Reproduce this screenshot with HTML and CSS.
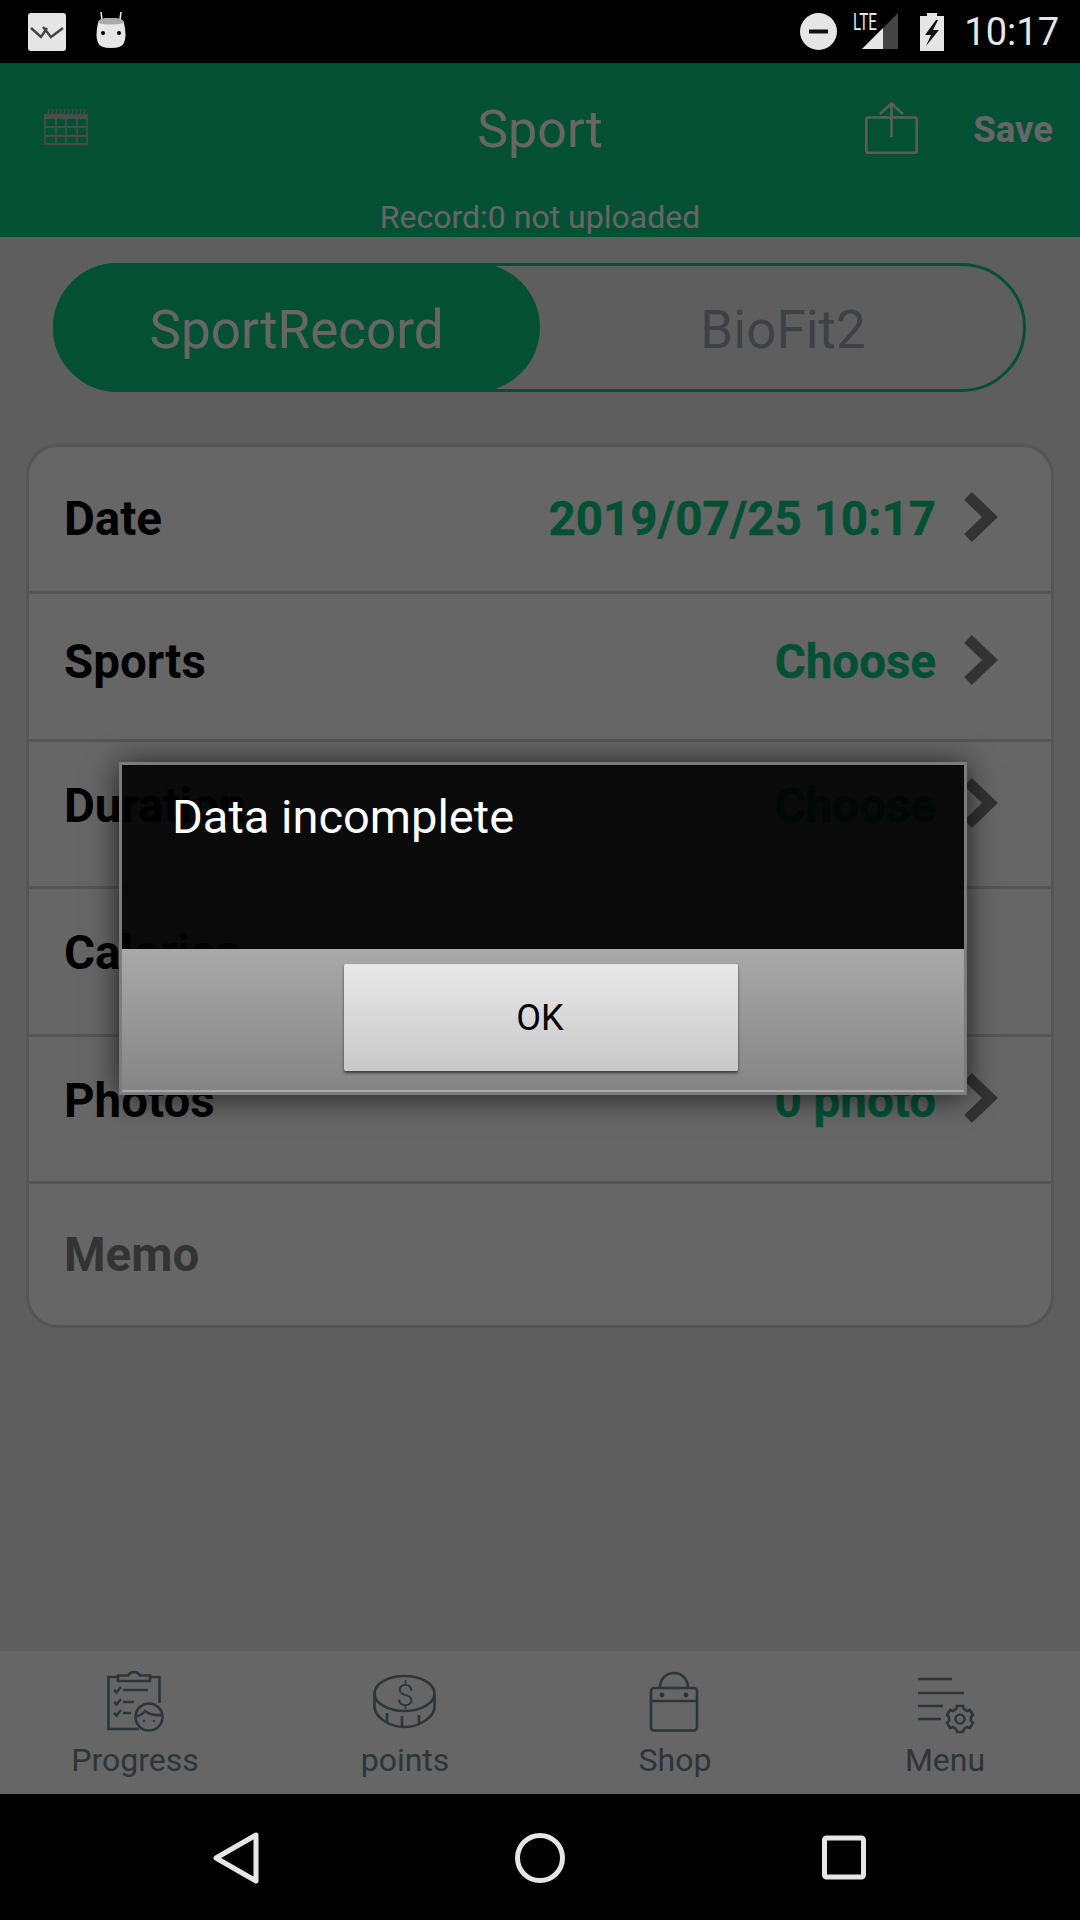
FILE: index.html
```html
<!DOCTYPE html>
<html lang="en">
<head>
  <meta charset="UTF-8">
  <meta name="viewport" content="width=device-width, initial-scale=1.0">
  <title>Sport</title>
  <link rel="stylesheet" href="styles.css">
</head>
<body>
  <div class="phone">
    <div class="status-bar">
      <div class="status-left">
        <svg class="ic-note" viewBox="0 0 38 38">
          <rect width="38" height="38" rx="3" fill="#e6e6e6"/>
          <path d="M3 15 L13 24 L19 15 M15 14 L23 24 L35 15" fill="none" stroke="#444" stroke-width="2.4"/>
        </svg>
        <svg class="ic-droid" viewBox="0 0 32 36">
          <path d="M7 8 L6 0 M25 8 L26 0" stroke="#e6e6e6" stroke-width="1.6"/>
          <path d="M3 11 Q3 6 16 6 Q29 6 29 11 Q32 24 29 31 Q27 36 16 36 Q5 36 3 31 Q0 24 3 11 Z" fill="#e6e6e6"/>
          <path d="M3 11 Q3 6 16 6 Q29 6 29 11 Q16 14 3 11 Z" fill="#aaa"/>
          <circle cx="8" cy="21" r="2" fill="#000"/>
          <circle cx="24" cy="21" r="2" fill="#000"/>
        </svg>
      </div>
      <div class="status-right">
        <svg class="ic-dnd" viewBox="0 0 37 37">
          <circle cx="18.5" cy="18.5" r="18.5" fill="#e6e6e6"/>
          <rect x="9" y="16.5" width="19" height="4" fill="#111"/>
        </svg>
        <svg class="ic-signal" viewBox="0 0 45 37">
          <path d="M45 0 V36 H9 Z" fill="#444"/>
          <path d="M30 15 V36 H9 Z" fill="#e6e6e6"/>
          <text x="0" y="17" class="lte" textLength="24" lengthAdjust="spacingAndGlyphs">LTE</text>
        </svg>
        <svg class="ic-battery" viewBox="0 0 24 38">
          <path d="M7 0 H17 V3 H24 V38 H0 V3 H7 Z" fill="#e6e6e6"/>
          <path d="M16 7 L5 22 H11 L6 33 L19 17 H13 L18 7 Z" fill="#111"/>
        </svg>
        <span class="clock">10:17</span>
      </div>
    </div>

    <div class="app">
      <div class="header">
        <div class="header-top">
          <svg class="ic-calendar" viewBox="0 0 44 37">
            <path d="M4 6 L5 1 M8 6 L9 1 M12 6 L13 1 M16 6 L17 1 M20 6 L21 1 M24 6 L25 1 M28 6 L29 1 M32 6 L33 1 M36 6 L37 1 M40 6 L41 1" stroke="#bbb" stroke-width="1.2"/>
            <rect x="0" y="6" width="44" height="5" fill="#bbb"/>
            <path d="M1 11 V36 H43 V11 M1 19 H43 M1 28 H43 M12 11 V36 M22 11 V36 M33 11 V36" fill="none" stroke="#bbb" stroke-width="1.8"/>
          </svg>
          <div class="title">Sport</div>
          <div class="header-actions">
            <svg class="ic-upload" viewBox="0 0 53 52">
              <rect x="1.3" y="15.5" width="50.4" height="35.2" rx="2" fill="none" stroke="#e6e6e6" stroke-width="2.6"/>
              <path d="M26.5 1 V35 M15 12 L26.5 1.5 L38 12" fill="none" stroke="#e6e6e6" stroke-width="2.6"/>
            </svg>
            <span class="save">Save</span>
          </div>
        </div>
        <div class="subtitle">Record:0 not uploaded</div>
      </div>

      <div class="segment">
        <div class="seg-item seg-active">SportRecord</div>
        <div class="seg-item">BioFit2</div>
      </div>

      <div class="card">
        <div class="row">
          <span class="row-label">Date</span>
          <span class="row-value">2019/07/25 10:17</span>
          <svg class="chevron" viewBox="0 0 34 50"><path d="M4 4 L26 25 L4 46" fill="none" stroke="#808080" stroke-width="11"/></svg>
        </div>
        <div class="row">
          <span class="row-label">Sports</span>
          <span class="row-value">Choose</span>
          <svg class="chevron" viewBox="0 0 34 50"><path d="M4 4 L26 25 L4 46" fill="none" stroke="#808080" stroke-width="11"/></svg>
        </div>
        <div class="row">
          <span class="row-label">Duration</span>
          <span class="row-value">Choose</span>
          <svg class="chevron" viewBox="0 0 34 50"><path d="M4 4 L26 25 L4 46" fill="none" stroke="#808080" stroke-width="11"/></svg>
        </div>
        <div class="row">
          <span class="row-label">Calories</span>
        </div>
        <div class="row">
          <span class="row-label">Photos</span>
          <span class="row-value">0 photo</span>
          <svg class="chevron" viewBox="0 0 34 50"><path d="M4 4 L26 25 L4 46" fill="none" stroke="#808080" stroke-width="11"/></svg>
        </div>
        <div class="row">
          <span class="row-label row-memo">Memo</span>
        </div>
      </div>

      <div class="tabs">
        <div class="tab">
          <svg class="tab-icon" viewBox="0 0 64 64">
            <path d="M36 59 H5.5 V7 H15 M47 7 H56.5 V33" fill="none"/>
            <path d="M15 11 V5.5 H25 Q27 2 31 2 Q35 2 37 5.5 H47 V11 Z" fill="none"/>
            <path d="M11 20 L13.5 22.5 L18 17 M11 32 L13.5 34.5 L18 29 M11 43 L13.5 45.5 L18 40" fill="none"/>
            <path d="M20 20 H45 M20 32 H31 M20 43 H28" fill="none"/>
            <circle cx="46" cy="47" r="13.5" fill="none"/>
            <path d="M33.5 46 Q38 46 42 41 Q48 46 59 45" fill="none"/>
            <circle cx="41" cy="51" r="1.2" class="dot"/>
            <circle cx="51" cy="51" r="1.2" class="dot"/>
          </svg>
          <span class="tab-label">Progress</span>
        </div>
        <div class="tab">
          <svg class="tab-icon" viewBox="0 0 64 64">
            <ellipse cx="31.5" cy="23.5" rx="30" ry="17.5" fill="none"/>
            <path d="M1.5 24 V38 C3 48 17 57 31.5 57 C46 57 60 48 61.5 38 V24" fill="none"/>
            <path d="M14 43 V53 M29 46 V57 M46 45 V55" fill="none"/>
            <text x="32" y="36" class="coin-sign">$</text>
          </svg>
          <span class="tab-label">points</span>
        </div>
        <div class="tab">
          <svg class="tab-icon" viewBox="0 0 64 64">
            <rect x="8" y="18" width="46" height="42.5" rx="3" fill="none"/>
            <path d="M8 31 H54 M17 18 C17 -2 45 -2 45 18" fill="none"/>
            <circle cx="19" cy="25" r="2.4" class="dot"/>
            <circle cx="43" cy="25" r="2.4" class="dot"/>
          </svg>
          <span class="tab-label">Shop</span>
        </div>
        <div class="tab">
          <svg class="tab-icon" viewBox="0 0 64 64">
            <path d="M5 9 H39 M5 23 H51 M5 36 H30 M5 49 H28" fill="none"/>
            <path d="M44 36 H50 L51 39 L54 41 L57 40 L60 45 L58 47 V51 L60 53 L57 58 L54 57 L51 59 L50 62 H44 L43 59 L40 57 L37 58 L34 53 L36 51 V47 L34 45 L37 40 L40 41 L43 39 Z" fill="none"/>
            <circle cx="47" cy="49" r="4.5" fill="none"/>
          </svg>
          <span class="tab-label">Menu</span>
        </div>
      </div>

      <div class="dim"></div>

      <div class="dialog">
        <div class="dialog-body">Data incomplete</div>
        <div class="dialog-foot">
          <div class="dialog-btn">OK</div>
        </div>
      </div>
    </div>

    <div class="nav-bar">
      <svg class="nav-icon" viewBox="0 0 48 54"><path d="M4 27 L44 4 V50 Z" fill="none" stroke-linejoin="round"/></svg>
      <svg class="nav-icon" viewBox="0 0 54 54"><circle cx="27" cy="27" r="22.5" fill="none"/></svg>
      <svg class="nav-icon" viewBox="0 0 48 54"><rect x="4.5" y="7" width="39" height="39" rx="2" fill="none"/></svg>
    </div>
  </div>
</body>
</html>
```

FILE: styles.css
```css
* {
  box-sizing: border-box;
}

body {
  margin: 0;
  background-color: #000;
  font-family: 'Roboto', sans-serif;
}

.phone {
  width: 1080px;
  height: 1920px;
  display: flex;
  flex-direction: column;
  overflow: hidden;
}

/* status bar */
.status-bar {
  height: 63px;
  background-color: #000;
  display: flex;
  justify-content: space-between;
  align-items: center;
  padding: 0 21px 0 28px;
}

.status-left,
.status-right {
  display: flex;
  align-items: center;
}

.ic-note {
  width: 38px;
  height: 38px;
  margin-right: 29px;
}

.ic-droid {
  width: 32px;
  height: 36px;
  margin-top: -4px;
}

.ic-dnd {
  width: 37px;
  height: 37px;
  margin-right: 16px;
}

.ic-signal {
  width: 45px;
  height: 37px;
  margin-right: 22px;
  overflow: visible;
}

.lte {
  font-family: 'Roboto', sans-serif;
  font-size: 24px;
  fill: #e6e6e6;
}

.ic-battery {
  width: 24px;
  height: 38px;
  margin-right: 20px;
}

.clock {
  font-size: 38px;
  color: #e6e6e6;
}

/* page under the dialog */
.app {
  position: relative;
  flex: 1;
  display: flex;
  flex-direction: column;
  background-color: #ebebeb;
}

.header {
  height: 174px;
  background-color: #0ac882;
  color: #fff;
}

.header-top {
  height: 131px;
  display: grid;
  grid-template-columns: 1fr auto 1fr;
  align-items: center;
  padding: 0 27px;
}

.ic-calendar {
  width: 44px;
  height: 37px;
  margin-left: 17px;
  margin-top: -4px;
}

.title {
  font-size: 52px;
  padding-top: 2px;
}

.header-actions {
  display: flex;
  justify-content: flex-end;
  align-items: center;
  gap: 55px;
}

.ic-upload {
  width: 53px;
  height: 52px;
  margin-top: -2px;
}

.save {
  font-size: 36.5px;
  font-weight: bold;
  padding-top: 2px;
}

.subtitle {
  height: 43px;
  line-height: 46px;
  font-size: 32px;
  text-align: center;
}

.segment {
  display: flex;
  height: 129px;
  margin: 26px 54px 0 53px;
  border: 3px solid #0ac882;
  border-radius: 65px;
}

.seg-item {
  flex: 1;
  margin: -3px -3px -3px 0;
  padding-top: 4px;
  display: flex;
  align-items: center;
  justify-content: center;
  font-size: 53px;
  color: #9ca3ad;
}

.seg-active {
  flex: none;
  width: 487px;
  margin: -3px 0 -3px -3px;
  background-color: #0ac882;
  border-radius: 65px;
  color: #fff;
}

.card {
  height: 884px;
  margin: 52px 26px 0;
  background-color: #fff;
  border: 3px solid #d4d4d4;
  border-radius: 32px;
  display: flex;
  flex-direction: column;
}

.row {
  flex: none;
  height: 147.5px;
  display: flex;
  align-items: center;
  padding: 0 53px 8px 35px;
  border-top: 3px solid #d4d4d4;
  font-size: 47.5px;
  font-weight: bold;
}

.row:first-child {
  height: 144px;
  padding-bottom: 0;
  border-top: none;
}

/* the text sits high in the lower rows */
.row:nth-child(n+3) {
  padding-bottom: 16px;
}

.row:last-child {
  flex: 1;
  padding-bottom: 0;
}

.row-label {
  color: #000;
  margin-right: auto;
}

.row-memo {
  color: #808080;
}

.row-value {
  color: #0ac882;
  -webkit-text-stroke: 0.4px #0ac882;
}

.chevron {
  width: 34px;
  height: 50px;
  margin-left: 28px;
  margin-top: -5px;
}

.tabs {
  margin-top: auto;
  height: 143px;
  background-color: #fff;
  display: grid;
  grid-template-columns: repeat(4, 1fr);
  padding-top: 19px;
}

.tab {
  display: flex;
  flex-direction: column;
  align-items: center;
}

.tab-icon {
  width: 64px;
  height: 64px;
  stroke: #6e8591;
  stroke-width: 2.6;
}

.tab-icon .dot {
  fill: #6e8591;
  stroke: none;
}

.coin-sign {
  font-family: 'Roboto', sans-serif;
  font-weight: 300;
  font-size: 32px;
  text-anchor: middle;
  fill: #6e8591;
  stroke: none;
}

.tab-label {
  margin-top: 6px;
  font-size: 32px;
  line-height: 40px;
  color: #6e8591;
}

/* dialog */
.dim {
  position: absolute;
  inset: 0;
  background-color: rgba(0, 0, 0, 0.6);
}

.dialog {
  position: absolute;
  left: 119px;
  top: 699px;
  width: 848px;
  height: 333px;
  border: 3px solid #7c7c7c;
  box-shadow: 0 2px 28px rgba(0, 0, 0, 0.7);
  display: flex;
  flex-direction: column;
}

.dialog-body {
  height: 184px;
  padding: 24px 50px;
  background-color: rgba(0, 0, 0, 0.9);
  color: #fff;
  font-size: 47px;
}

.dialog-foot {
  flex: 1;
  display: flex;
  justify-content: center;
  align-items: flex-start;
  padding: 15px 4px 0 0;
  background: linear-gradient(#a9a9a9, #858585);
  border-bottom: 2px solid #a8a8a8;
}

.dialog-btn {
  width: 394px;
  height: 107px;
  padding-right: 2px;
  display: flex;
  align-items: center;
  justify-content: center;
  background: linear-gradient(#e8e8e8, #c8c8c8);
  border-radius: 2px;
  box-shadow: 0 2px 3px rgba(0, 0, 0, 0.6);
  color: #000;
  font-size: 36px;
}

/* nav bar */
.nav-bar {
  height: 126px;
  background-color: #000;
  display: grid;
  grid-template-columns: repeat(3, 304px);
  justify-content: center;
  justify-items: center;
  align-items: center;
  padding-top: 1px;
}

.nav-icon {
  height: 54px;
  stroke: #e6e6e6;
  stroke-width: 5;
}
```
